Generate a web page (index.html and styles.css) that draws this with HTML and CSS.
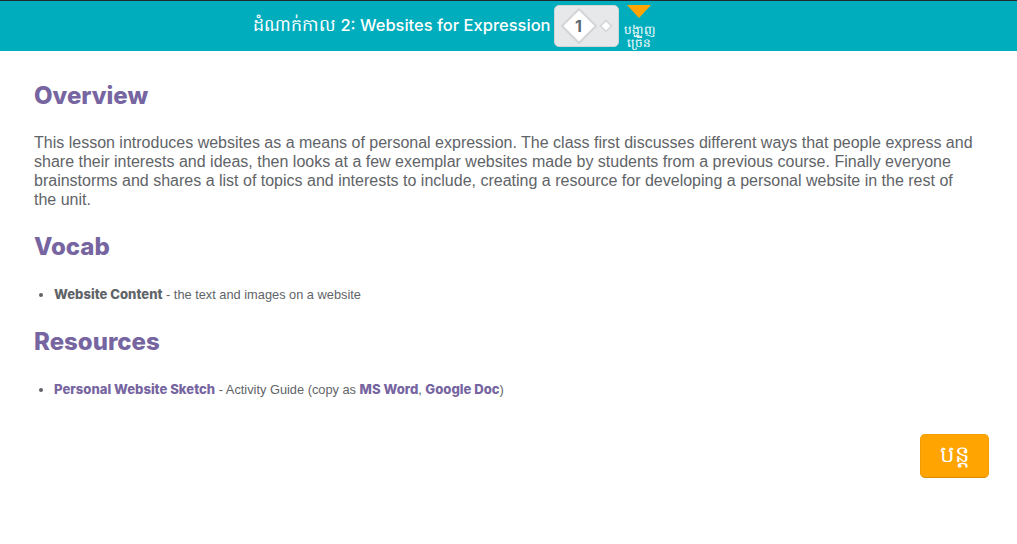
FILE: index.html
```html
<!DOCTYPE html>
<html lang="km">
<head>
<meta charset="utf-8">
<title>Stage 2: Websites for Expression</title>
<link rel="stylesheet" href="styles.css">
</head>
<body>
<header class="topbar">
  <div class="title"><span class="title-km">ដំណាក់កាល</span> 2: Websites for Expression</div>
  <div class="progress">
    <svg class="bubble-big" width="38" height="38" viewBox="0 0 38 38"><path d="M19 2 36 19 19 36 2 19Z" fill="#fff" stroke="#d4d5d7" stroke-width="2" stroke-linejoin="round"/><text x="18.500" y="24.500" text-anchor="middle" class="bubble-num">1</text></svg>
    <svg class="bubble-small" width="14" height="14" viewBox="0 0 14 14"><path d="M7 1.500 12.500 7 7 12.500 1.500 7Z" fill="#fff" stroke="#d4d5d7" stroke-width="1.500" stroke-linejoin="round"/></svg>
  </div>
  <div class="more">
    <svg class="caret" width="24" height="13" viewBox="0 0 24 13"><path d="M0 0H24L12 13Z" fill="#ffa400"/></svg>
    <div class="more-label">បង្ហាញច្រើន</div>
  </div>
</header>
<main class="content">
  <h2 class="first">Overview</h2>
  <p class="lead">This lesson introduces websites as a means of personal expression. The class first discusses different ways that people express and share their interests and ideas, then looks at a few exemplar websites made by students from a previous course. Finally everyone brainstorms and shares a list of topics and interests to include, creating a resource for developing a personal website in the rest of the unit.</p>
  <h2>Vocab</h2>
  <ul>
    <li><strong>Website Content</strong> - the text and images on a website</li>
  </ul>
  <h2>Resources</h2>
  <ul>
    <li><a href="#">Personal Website Sketch</a> - Activity Guide (copy as <a href="#">MS Word</a>, <a href="#">Google Doc</a>)</li>
  </ul>
  <div class="actions"><button class="next">បន្ត</button></div>
</main>
</body>
</html>
```
FILE: styles.css
```css
* { box-sizing: border-box; }
html, body { margin: 0; padding: 0; background: #fff; }
body { font-family: "Liberation Sans", Arial, sans-serif; color: #5f6468; }
.topbar {
  height: 51px;
  background: #00adbc;
  border-top: 1px solid #1f2a30;
  display: flex;
  align-items: center;
  padding-left: 253px;
}
.title {
  font-family: Inter, "Noto Sans", sans-serif;
  font-size: 16.5px;
  font-weight: 450;
  color: #fff;
  white-space: nowrap;
  width: 301px;
}
.title-km { font-size: 17.4px; }
.progress {
  width: 65px;
  height: 42px;
  background: #e7e8ea;
  border: 1px solid #d4d5d7;
  border-radius: 5px;
  display: flex;
  align-items: center;
  padding-left: 5px;
  gap: 1px;
}
.bubble-num { font-family: Inter, sans-serif; font-weight: 700; font-size: 16px; fill: #5b6770; }
.more {
  margin-left: 6px;
  width: 28px;
  height: 100%;
  display: flex;
  flex-direction: column;
  align-items: center;
  padding-top: 4px;
}
.more-label {
  font-size: 12px;
  line-height: 13px;
  color: #fff;
  text-align: center;
  margin-top: 6px;
  width: 30px;
  flex: none;
}
.content { padding: 0 34px; }
h2 {
  font-family: Inter, "Noto Sans", sans-serif;
  font-weight: 800;
  font-size: 24px;
  line-height: 30px;
  color: #7665a0;
  margin: 0 0 21px;
}
h2.first { padding-top: 30px; margin-bottom: 22px; }
.lead {
  font-size: 16px;
  line-height: 19px;
  margin: 0 6px 23px 0;
}
ul { margin: 0 0 23px; padding-left: 20px; }
li { font-size: 12.8px; line-height: 18px; padding-top: 2px; }
strong, a { font-family: Inter, "Noto Sans", sans-serif; font-weight: 800; font-size: 13.1px; }
a { color: #7665a0; text-decoration: none; }
.actions { display: flex; justify-content: flex-end; margin-right: -6px; padding-top: 12px; }
.next {
  width: 69px;
  height: 44px;
  background: #ffa400;
  border: 1px solid #f39c00;
  border-bottom-color: #d98a00;
  border-radius: 5px;
  color: #fff;
  font-size: 23px;
  font-family: "Liberation Sans", sans-serif;
}
```
